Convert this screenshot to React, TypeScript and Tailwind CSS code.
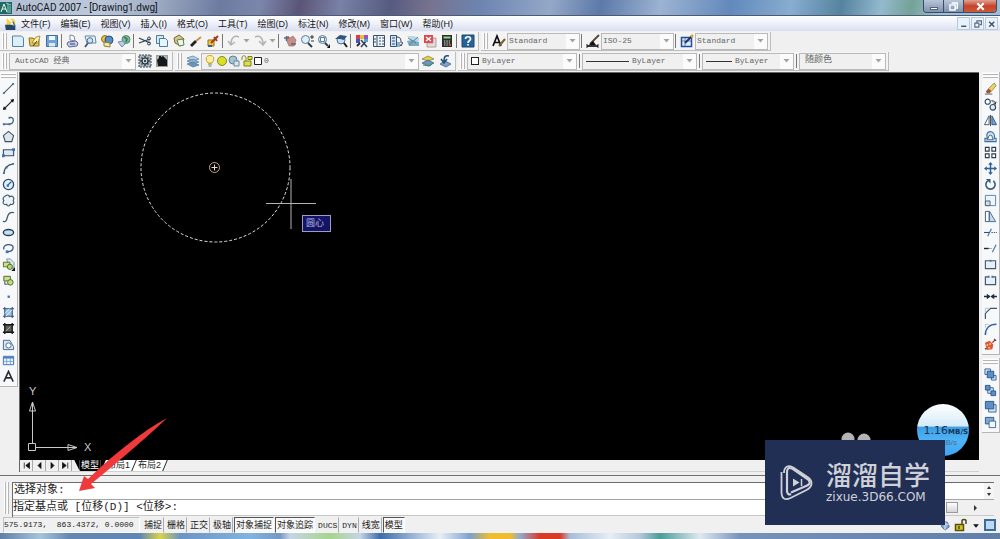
import { useState } from 'react';
import type { ReactNode } from 'react';

interface Tool {
  name: string;
  icon: ReactNode;
}

const NAVY = '#24405f';
const BLUE = '#3d74b0';
const PALE = '#cfe2f3';

// Barra estándar, separada en grupos
const fileTools: Tool[] = [
  { name: 'New', icon: <path d="M1.500 2h9l2 2v8.500h-11z" fill="#d9effa" stroke="#5583a3" /> },
  { name: 'Open', icon: <><path d="M1 4h4l1 1h5v7H2z" fill="#e8c954" stroke="#8a7020" /><path d="M4 9l4-6 4-1-2 7z" fill="#fff3a8" stroke="#8a7020" strokeWidth=".7" /><path d="M5 12l4-5" stroke="#333" /></> },
  { name: 'Save', icon: <><path d="M1.500 1.500h11v11h-11z" fill="#6ea3d4" stroke="#3a6ea0" /><path d="M4 2h6v4H4z" fill="#f2f8fd" /><path d="M4 9h6v3.500H4z" fill="#dbe9f5" /></> },
];

const printTools: Tool[] = [
  { name: 'Plot', icon: <><path d="M4 1l4 1 1 5-5-1z" fill="#fff" stroke="#7a86b0" /><path d="M2 8l8-1 2 2-1 3-8 1-2-3z" fill="#c5cce6" stroke="#5d6a99" /><path d="M4 10h5" stroke="#35406e" /></> },
  { name: 'Plot preview', icon: <><path d="M2 2h10l1 7H4z" fill="#eef5fb" stroke="#5f86ab" /><circle cx="7" cy="6.500" r="2.800" fill="#cfe2f3" stroke="#4d6f96" /><path d="M5 9l-3 4" stroke="#3d5b80" strokeWidth="1.800" /></> },
  { name: 'Publish', icon: <><circle cx="5" cy="5" r="3.500" fill="#e6c23e" stroke="#8c6f13" /><circle cx="9" cy="6" r="4" fill="#5a8bc9" stroke="#2b4f80" /><path d="M4 8l6 1v4l-6-1z" fill="#f3e9a4" stroke="#8c7d2f" /></> },
  { name: '3D DWF', icon: <><circle cx="9" cy="5.500" r="4" fill="#7fb6a2" stroke="#50876e" /><path d="M7 3l3 2-1 3" stroke="#2e7a48" strokeWidth="1.500" fill="none" /><path d="M1 8l5-1 2 3-3 3z" fill="#b8cfe4" stroke="#7291b0" /></> },
];

const editTools: Tool[] = [
  { name: 'Cut', icon: <><path d="M1 4l11 5M1 9l11-4" stroke="#333f4e" strokeWidth="1.300" /><circle cx="11" cy="4.500" r="1.500" fill="none" stroke={NAVY} /><circle cx="11" cy="9.500" r="1.500" fill="none" stroke={NAVY} /></> },
  { name: 'Copy', icon: <><path d="M1.500 1.500h7v8h-7z" fill="#d5e9f5" stroke="#4c7d9e" /><path d="M4.500 4.500h6l2 2v6h-8z" fill="#e6f4fb" stroke="#4c7d9e" /></> },
  { name: 'Paste', icon: <><path d="M2 4l5-3 5 4-3 7-6-3z" fill="#d8c68c" stroke="#77663a" /><path d="M5 6l6-1 1 6-5 1z" fill="#eef6e8" stroke="#5f8150" /></> },
  { name: 'Match properties', icon: <><path d="M2 12l5-5" stroke="#222" strokeWidth="2.800" /><path d="M7 7l5-4" stroke="#d5894b" strokeWidth="1.800" /></> },
  { name: 'Block editor', icon: <><path d="M2 6h6v6H2z" fill="#f4c82e" stroke="#956c10" /><path d="M5 9l7-7M8 3l3 4" stroke="#a33b21" strokeWidth="2" /><path d="M2 12h4" stroke="#2f5fa5" strokeWidth="2" /></> },
];

const undoIcon = <path d="M12 3C7 1 4 4 4 10M1 7l3 4 4-3" fill="none" stroke="#b4b4b4" strokeWidth="1.500" />;
const redoIcon = <path d="M2 3c5-2 8 1 8 7M6 7l4 4 3-4" fill="none" stroke="#b4b4b4" strokeWidth="1.500" />;

const zoomTools: Tool[] = [
  { name: 'Pan', icon: <><path d="M3 5l2-3 2 2 3-2 3 4-2 6H6z" fill="#c98f84" stroke="#a06a62" strokeWidth=".7" /><path d="M1 4h5M3.500 2v5M8 10h5" stroke="#536b8c" strokeWidth="1.300" /></> },
  { name: 'Zoom realtime', icon: <><circle cx="5.500" cy="5.500" r="4" fill="#dfeffb" stroke="#5b7896" /><path d="M8 9l4 4" stroke="#303f50" strokeWidth="2" /><path d="M10 3h4M12 1v4M11 7h3" stroke="#333" /></> },
  { name: 'Zoom window', icon: <><circle cx="5.500" cy="5.500" r="4" fill="#dfeffb" stroke="#5b7896" /><path d="M3.500 3.500h4v4h-4z" fill="#fff" stroke="#5d7b9f" /><path d="M8 9l3 3" stroke="#303f50" strokeWidth="2" /><path d="M13 10v4h-3z" fill="#111" /></> },
  { name: 'Zoom previous', icon: <><circle cx="7" cy="6" r="4" fill="#c8e1f5" stroke="#4c6f95" /><path d="M10 9l3 4" stroke="#222" strokeWidth="2" /><path d="M1 5l5-4 7 1-3 4-4-1z" fill="#33567e" /></> },
];

const paletteTools: Tool[] = [
  { name: 'Properties', icon: <><path d="M1 1h4v4H1z" fill="#e33b44" /><path d="M5 1h4v4H5z" fill="#e3c13b" /><path d="M9 1h4v4H9z" fill="#a24dc4" /><path d="M1 5h4v4H1z" fill="#3b57c9" /><path d="M6 6l6 7M12 6l-6 7" stroke="#333b55" strokeWidth="1.500" /><path d="M2 12l3-3" stroke="#2b2b2b" strokeWidth="2" /><path d="M9 5h4v3H9z" fill="#48a7cc" /></> },
  { name: 'DesignCenter', icon: <><path d="M1.500 1.500h11v11h-11z" fill="#eef3f7" stroke="#35516b" /><path d="M5 2v10M7 4h2M10 4h2M7 7h2M10 7h2M7 10h2M10 10h2M2 5h2M2 8h2" stroke="#35516b" /></> },
  { name: 'Tool palettes', icon: <><path d="M1.500 1.500h6v11h-6z" fill="#d4e4f3" stroke="#2f527c" /><path d="M3 4h3M3 7h3M3 10h3" stroke="#2f527c" /><path d="M8 3c4 0 4 3 4 6M9 8l3 4 2-4" stroke="#28384c" fill="none" /><path d="M8 8h3v5H8z" fill="#8baed2" /></> },
  { name: 'Sheet set', icon: <><path d="M1 2h7l5 2v3H6z" fill="#b9d8e5" /><path d="M1 7l5-1 7 2v4H3z" fill="#7aa9c3" /><path d="M2 4l8 5M3 11l9-8" stroke="#5e8292" /></> },
  { name: 'Markup', icon: <><path d="M1 1h9v8H1z" fill="#e1434d" /><path d="M3 3l5 4M8 3L3 7" stroke="#fff" strokeWidth="1.500" /><path d="M4 9h6V4h3v9H4z" fill="#e6dbdb" stroke="#a58b8b" strokeWidth=".8" /></> },
  { name: 'QuickCalc', icon: <><path d="M2 1h10v12H2z" fill="#26302d" /><path d="M3.500 2.500h7v2h-7z" fill="#9fd08b" /><path d="M4 7h6M4 9h6M4 11h6" stroke="#e4d8d3" strokeDasharray="1.400 1" /><path d="M9 10h2v2H9z" fill="#d64232" /></> },
];

const helpIcon = <><path d="M1 1h12v12H1z" fill="#28629b" stroke="#184673" /><path d="M4.500 5c0-3 5-3 5 0 0 2-2.500 1.500-2.500 4M7 10v1.600" stroke="#fff" strokeWidth="1.700" fill="none" /></>;

const textStyleIcon = <><path d="M1 12L5 2l4 10M2.500 8.500h5" stroke="#111" strokeWidth="1.700" fill="none" /><path d="M7 12l6-7" stroke="#7c5a33" strokeWidth="2" /></>;
const dimStyleIcon = <><path d="M1 12h11" stroke="#222" strokeWidth="1.800" /><path d="M1 10v4M12 10v4" stroke="#222" /><path d="M4 10l3-3 6-6" stroke="#58483a" strokeWidth="1.800" /><path d="M3 11l4-4 3 4z" fill="#111" /></>;
const tableStyleIcon = <><path d="M1.500 3.500h10v9h-10z" fill="#dfebf8" stroke="#234f9a" strokeWidth="1.500" /><path d="M2 7h9M5 4v8" stroke="#5c83ba" /><path d="M5 9l7-7" stroke="#24365c" strokeWidth="2" /><path d="M11 3l2-2" stroke="#dca63c" strokeWidth="2.500" /></>;
const layersIcon = <><path d="M1 4l6-2 6 3-6 2z" fill="#b8d3e8" stroke="#54799b" strokeWidth=".7" /><path d="M1 7l6-2 6 3-6 2z" fill="#8bb2d1" stroke="#54799b" strokeWidth=".7" /><path d="M1 10l6-2 6 3-6 2z" fill="#6897bd" stroke="#54799b" strokeWidth=".7" /></>;
const gearIcon = <><path d="M1 1h12v12H1z" fill="#a9b4ba" stroke="#3a454c" strokeDasharray="2 1" /><path d="M7 2v10M2 7h10M3.500 3.500l7 7M10.500 3.500l-7 7" stroke="#3a4850" strokeWidth="1.500" /><circle cx="7" cy="7" r="3" fill="#cddbe2" stroke="#26323a" strokeWidth="1.200" /><circle cx="7" cy="7" r="1.200" fill="#34424b" /></>;
const homeIcon = <><path d="M1.500 1.500h11v11h-11z" fill="#b3b6b8" stroke="#5d6265" strokeDasharray="1 1" /><path d="M2 6l2-2V2h2v1l2-1 4 4v6H3z" fill="#15191b" /></>;
const layerBackIcon = <><path d="M1 5l6-3 6 3-6 2z" fill="#e6cf4c" stroke="#7a7835" strokeWidth=".7" /><path d="M1 9l6-3 6 3-6 3z" fill="#6b95ba" stroke="#3c5f80" strokeWidth=".7" /><path d="M2 11l7 1 3-3" stroke="#3b8a62" fill="none" /></>;
const layerPrevIcon = <><path d="M2 10l5-3 6 3-5 3z" fill="#7da4c6" stroke="#3c5f80" strokeWidth=".8" /><path d="M11 2C7 1 6 3 6 7M3 5l3 4 3-4" stroke="#234e7c" strokeWidth="1.600" fill="none" /></>;

const drawTools: Tool[] = [
  { name: 'Line', icon: <><path d="M2 12L12 2" stroke="#4a5e6e" strokeWidth="1.200" /><path d="M1 11h2v2H1zM11 1h2v2h-2z" fill={BLUE} /></> },
  { name: 'Construction line', icon: <><path d="M2 12L12 2" stroke="#222" strokeWidth="1.300" /><path d="M1 13l1-4 3 3zM13 1L9 2l3 3z" fill="#111" /></> },
  { name: 'Polyline', icon: <><path d="M1 11h7M8 4c5-2 6 6 0 7" stroke="#3c5572" strokeWidth="1.300" fill="none" /><path d="M1 10h2v2H1zM7 10h2v2H7zM7 3h2v2H7z" fill={BLUE} /></> },
  { name: 'Polygon', icon: <path d="M7 1.500L12.500 6l-2 6.500h-7L1.500 6z" fill="#dde6ed" stroke="#3f5261" strokeWidth="1.200" /> },
  { name: 'Rectangle', icon: <><path d="M1.500 4h11v6.500h-11z" fill="#dde8f3" stroke="#35506c" strokeWidth="1.200" /><path d="M0 9h3v3H0zM11 2.500h3v3h-3z" fill={BLUE} /></> },
  { name: 'Arc', icon: <><path d="M2 13C2 7 6 3 12 2" fill="none" stroke="#40566b" strokeWidth="1.300" /><path d="M1 11h2v2H1zM4 5h2v2H4zM11 1h2v2h-2z" fill={BLUE} /></> },
  { name: 'Circle', icon: <><circle cx="7" cy="7" r="5.500" fill="#e5f0fa" stroke="#2c4d70" strokeWidth="1.400" /><path d="M6 8l4-4" stroke="#245e9c" strokeWidth="1.300" /><path d="M5 7h2.500v2.500H5z" fill={BLUE} /></> },
  { name: 'Revision cloud', icon: <path d="M4 2c2-2 4 0 4 1 3-2 6 1 4 4 2 3-1 5-3 4-1 3-4 2-4 0-3 1-5-1-3-4-2-2 0-4 2-5z" fill="#eef3f6" stroke="#40566b" strokeWidth="1.200" /> },
  { name: 'Spline', icon: <path d="M1 12c3 2 4-1 5-5s4-5 7-4" fill="none" stroke="#40566b" strokeWidth="1.300" /> },
  { name: 'Ellipse', icon: <ellipse cx="7" cy="7" rx="5.500" ry="3.300" fill="#ccdff0" stroke="#263f5a" strokeWidth="1.500" /> },
  { name: 'Ellipse arc', icon: <><path d="M2 8C0 2 12 1 12 6c0 3-3 5-7 4" fill="none" stroke="#40597c" strokeWidth="1.400" /><path d="M4 9h3v3H4z" fill={BLUE} /></> },
  { name: 'Insert block', icon: <><path d="M5 1h4l4 4v6H8z" fill="#dfe6ee" stroke="#7691a8" /><path d="M1.500 4.500h7v5h-7z" fill="#cddf8a" stroke="#566b28" /><circle cx="8.500" cy="9.500" r="2.800" fill="#b4d57b" stroke="#3f6b29" /><path d="M14 10v4h-4z" fill="#111" /></> },
  { name: 'Make block', icon: <><path d="M2 2.500h7v5H2z" fill="#d5dd86" stroke="#4e6226" /><circle cx="9" cy="9" r="3" fill="#c4dc7f" stroke="#3f6b29" /><path d="M3 8v3h3" stroke="#345" fill="none" /></> },
  { name: 'Point', icon: <path d="M6 6h2.500v2.500H6z" fill={BLUE} /> },
  { name: 'Hatch', icon: <><path d="M3 3h8v8H3z" fill="#9cc3e8" /><path d="M3 1v12M11 1v12M1 3h12M1 11h12" stroke="#31537b" strokeWidth="1.200" /><path d="M3 8l5-5M4 11l7-7" stroke="#fff" strokeWidth=".8" /></> },
  { name: 'Gradient', icon: <><path d="M3 3h8v8H3z" fill="#5a6158" /><path d="M3 1v12M11 1v12M1 3h12M1 11h12" stroke="#15191a" strokeWidth="1.500" /><path d="M4 10l5-5" stroke="#a9b3a4" /></> },
  { name: 'Region', icon: <><path d="M1.500 2.500h7l4 7v3h-11z" fill="#d7e6f4" stroke="#41688f" /><circle cx="7" cy="8" r="2.800" fill="#fff" stroke="#41688f" /></> },
  { name: 'Table', icon: <><path d="M1.500 2.500h11v9h-11z" fill="#eef5fd" stroke="#3c6cb0" /><path d="M1.500 2.500h11v2.500h-11z" fill="#4f83c8" /><path d="M5 5v6M9 5v6M2 8h10" stroke="#7ba3d6" /></> },
  { name: 'Multiline text', icon: <path d="M2 12.500L7 1.500l5 11M4 8.500h6" fill="none" stroke="#2a2d31" strokeWidth="1.700" /> },
];

const modifyTools: Tool[] = [
  { name: 'Erase', icon: <><path d="M2 10l3-3 3 3-2 2H3z" fill="#a8503c" /><path d="M5 7l6-6 2 3-5 6z" fill="#ead469" stroke="#7c6c24" strokeWidth=".7" /><path d="M1 13h8" stroke="#555" /></> },
  { name: 'Copy object', icon: <><circle cx="4" cy="4" r="2.800" fill="#fff" stroke="#2f4a66" strokeWidth="1.200" /><circle cx="9.500" cy="10" r="3" fill="#dceaf6" stroke="#2f4a66" strokeWidth="1.200" /><path d="M8 3c3 0 4 1 4 3M10 5l2 2 1-3" stroke="#222" fill="none" /></> },
  { name: 'Mirror', icon: <><path d="M5.500 2v9.500h-5z" fill="#fff" stroke="#3f566c" /><path d="M8.500 2v9.500h5z" fill="#79a7d4" stroke="#2f5179" /><path d="M7 1v12" stroke="#444" /></> },
  { name: 'Offset', icon: <><path d="M1 12.500h12V9H11c2-8-8-10-8-3 0 2 2 3 0 3H1z" fill="#cfe2f3" stroke="#3671ae" strokeWidth="1.200" /><path d="M3 10.500h7c-2-1 0-5-3-5S6 9 3 10.500z" fill="#fff" stroke="#40566b" /></> },
  { name: 'Array', icon: <path d="M1.500 1.500h4v4h-4zM8.500 1.500h4v4h-4zM1.500 8.500h4v4h-4zM8.500 8.500h4v4h-4z" fill="#fff" stroke="#2c3c4c" strokeWidth="1.200" /> },
  { name: 'Move', icon: <><path d="M7 2v10M2 7h10" stroke="#2f6199" strokeWidth="1.600" /><path d="M7 0l2.500 3h-5zM7 14l2.500-3h-5zM0 7l3-2.500v5zM14 7l-3-2.500v5z" fill="#2f6199" /></> },
  { name: 'Rotate', icon: <><path d="M4 3a5 5 0 1 0 6 0" fill="none" stroke="#35597f" strokeWidth="1.700" /><path d="M2 1h5v5z" fill="#35597f" /></> },
  { name: 'Scale', icon: <><path d="M1.500 1.500h11v11h-11z" fill="#eef5fb" stroke="#5583b3" /><path d="M1.500 7.500h5v5h-5z" fill="#d3dfea" stroke="#4e5f70" /></> },
  { name: 'Stretch', icon: <><path d="M1.500 1.500h4v11h-4z" fill="#fff" stroke="#3f566c" /><path d="M6 1.500l6.500 11H6z" fill="#c6dcf0" stroke="#3f6a98" /></> },
  { name: 'Trim', icon: <><path d="M0 7h6" stroke="#36516d" strokeWidth="1.200" /><path d="M8 7h6" stroke="#36516d" strokeDasharray="1.500 1" /><path d="M4 11l4-8" stroke={BLUE} strokeWidth="1.200" /></> },
  { name: 'Extend', icon: <><path d="M0 7h5" stroke="#222" strokeWidth="1.500" /><path d="M5 7h4" stroke="#36516d" strokeDasharray="1 1" /><path d="M9 11l4-8" stroke={BLUE} strokeWidth="1.200" /></> },
  { name: 'Break at point', icon: <><path d="M1.500 3h11v8.500h-11z" fill="#e7eef5" stroke="#465a6d" strokeWidth="1.200" /><path d="M6 2h2v2H6z" fill={BLUE} /></> },
  { name: 'Break', icon: <><path d="M5 3H1.500v8.500h11V3H9" fill="#e7eef5" stroke="#465a6d" strokeWidth="1.300" /><path d="M4 2h2v2H4zM8 2h2v2H8z" fill={BLUE} /></> },
  { name: 'Join', icon: <><path d="M0 7h6M8 7h6" stroke="#1d2d40" strokeWidth="1.500" /><path d="M3 4l4 3-4 3zM11 4L7 7l4 3z" fill="#1d2d40" /></> },
  { name: 'Chamfer', icon: <><path d="M1.500 14V8L7 2.500h7" fill="none" stroke="#40566b" strokeWidth="1.300" /><path d="M1.500 7V2.500H6" fill="none" stroke="#a9c3dc" /></> },
  { name: 'Fillet', icon: <><path d="M1.500 14c0-7 4-11.500 12-11.500" fill="none" stroke="#2f66a5" strokeWidth="1.700" /><path d="M1.500 6V2.500H5" fill="none" stroke="#a9c3dc" /></> },
  { name: 'Explode', icon: <><path d="M1 5l5-2 4 4-1 5-6 1z" fill="#dc5a32" /><path d="M3 7l1 1M6 6l1 1M5 10l1 1" stroke="#ffe9bb" strokeWidth="1.600" /><path d="M9 5l3-3M11 1l2 2M1 12l2-1" stroke="#7c3424" strokeWidth="1.300" /></> },
];

const orderTools: Tool[] = [
  { name: 'Bring to front', icon: <><path d="M1 1h6v6H1zM8 8h5v5H8z" fill={PALE} stroke="#3c6796" /><path d="M3.500 3.500h7v7h-7z" fill="#5c8fc6" stroke="#2c5687" /></> },
  { name: 'Send to back', icon: <><path d="M4 4h6v6H4z" fill={PALE} stroke="#3c6796" /><path d="M1.500 1.500h5v5h-5zM7.500 7.500h5v5h-5z" fill="#5c8fc6" stroke="#2c5687" /></> },
  { name: 'Bring above', icon: <><path d="M5 5h8v8H5z" fill={PALE} stroke="#3c6796" /><path d="M1.500 1.500h9v8h-9z" fill="#5c8fc6" stroke="#2c5687" /></> },
  { name: 'Send under', icon: <><path d="M1.500 1.500h9v7h-9z" fill="#7fa9d6" stroke="#2c5687" /><path d="M5.500 5.500h7v7h-7z" fill="#f3f8fc" stroke="#3c6796" /></> },
];

const menus = ['文件(F)', '编辑(E)', '视图(V)', '插入(I)', '格式(O)', '工具(T)', '绘图(D)', '标注(N)', '修改(M)', '窗口(W)', '帮助(H)'];
const modes = ['捕捉', '栅格', '正交', '极轴', '对象捕捉', '对象追踪', 'DUCS', 'DYN', '线宽', '模型'];

function Icon({ children, className = 'h-[14px] w-[14px]' }: { children: ReactNode; className?: string }) {
  return <svg viewBox="0 0 14 14" fill="none" aria-hidden="true" className={className}>{children}</svg>;
}

function ToolButton({ tool, vertical }: { tool: Tool; vertical?: boolean }) {
  return (
    <button
      type="button"
      aria-label={tool.name}
      className={`flex shrink-0 items-center justify-center hover:bg-sky-100 ${vertical ? 'h-[16px] w-full' : 'h-[18px] w-[17px]'}`}
    >
      <Icon className={vertical ? 'h-[13px] w-[13px]' : 'h-[14px] w-[14px]'}>{tool.icon}</Icon>
    </button>
  );
}

function Tools({ tools }: { tools: Tool[] }) {
  return <>{tools.map((t) => <ToolButton key={t.name} tool={t} />)}</>;
}

function Separator() {
  return <div className="mx-px h-[14px] w-[2px] shrink-0 border-l border-[#777]" />;
}

function Grip() {
  return (
    <div className="flex h-full w-[9px] shrink-0 items-center justify-center gap-px py-px">
      <span className="h-full w-[2px] border-r border-[#b5b5b5] bg-white" />
      <span className="h-full w-[2px] border-r border-[#b5b5b5] bg-white" />
    </div>
  );
}

function Toolbar({ children }: { children: ReactNode }) {
  return (
    <div className="flex h-[19px] shrink-0 items-center border-r border-b border-[#bdbdbd] bg-[#f4f4f4] pr-[2px]">
      <Grip />
      {children}
    </div>
  );
}

function DropArrow() {
  return (
    <svg viewBox="0 0 7 4" aria-hidden="true" className="h-[4px] w-[7px] shrink-0">
      <path d="M.5 0h6l-3 3.500z" fill="#a2a2a2" />
    </svg>
  );
}

function Combo({ label, value, width, children }: { label: string; value: string; width: string; children?: ReactNode }) {
  return (
    <div className={`flex h-[17px] shrink-0 items-center border border-[#b9b9b9] bg-[#f0f0f0] ${width}`}>
      {children}
      <select aria-label={label} className="h-full min-w-0 flex-1 appearance-none bg-transparent text-[#666] outline-none">
        <option>{value}</option>
      </select>
      <span className="flex h-full w-[13px] items-center justify-center bg-[#fbfbfb]"><DropArrow /></span>
    </div>
  );
}

function TitleBar() {
  return (
    <header className="flex h-[16px] shrink-0 justify-between border-b border-[#4c5a72] bg-[linear-gradient(100deg,#b3bfd2_0%,#bcc8d9_10%,#a3b0c6_15%,#6d7ba1_22%,#7c86ab_26%,#5b5577_30%,#7981a6_34%,#575b80_39%,#77738f_43%,#6d84b0_48%,#94a8c8_55%,#5d79a8_60%,#9cb3d2_66%,#6289bb_73%,#88add0_79%,#55839f_84%,#93b9cf_88%,#74a297_91%,#9dbfd9_94%)]">
      <div className="flex items-center gap-[4px]">
        <svg viewBox="0 0 12 12" aria-hidden="true" className="h-[12px] w-[12px]">
          <path d="M0 0h12v12H0z" fill="#1f6a64" />
          <path d="M1 10L4 2l3 8M2 7h4" stroke="#e4f5ef" fill="none" />
          <path d="M8 2v9M10 4v7M6 1l5 2" stroke="#8ad0b8" fill="none" />
        </svg>
        <h1 className="font-['Roboto','Noto_Sans',sans-serif] text-[10px] leading-[14px] text-[#10151d]">AutoCAD 2007 - [Drawing1.dwg]</h1>
      </div>
      <div className="mr-[3px] flex h-[13px] overflow-hidden rounded-b border border-t-0 border-[#3c4a62]">
        <button type="button" aria-label="最小化" className="flex w-[20px] items-center justify-center border-r border-[#3c4a62] bg-linear-to-b from-[#b9c6d8] to-[#7f93af]">
          <span className="mt-1 h-[3px] w-[8px] border border-[#56617a] bg-white" />
        </button>
        <button type="button" aria-label="还原" className="flex w-[20px] items-center justify-center border-r border-[#3c4a62] bg-linear-to-b from-[#b9c6d8] to-[#7f93af]">
          <Icon className="h-[9px] w-[9px]"><path d="M4 1.500h9v8h-3M1.500 4.500h8v8h-8z" stroke="#fff" strokeWidth="2.200" /></Icon>
        </button>
        <button type="button" aria-label="关闭" className="flex w-[32px] items-center justify-center bg-linear-to-b from-[#dfa092] via-[#c4432b] to-[#d0583a]">
          <Icon className="h-[9px] w-[9px]"><path d="M2 2l10 10M12 2L2 12" stroke="#fff" strokeWidth="3.200" /></Icon>
        </button>
      </div>
    </header>
  );
}

function MenuBar() {
  const mdi = 'flex h-[13px] w-[13px] items-center justify-center border border-[#b4c8de] bg-[#e9f2fb]';
  return (
    <nav className="flex h-[15px] shrink-0 items-center justify-between bg-linear-to-b from-white via-[#eef1fa] to-[#d9dff1] pr-[2px] pl-[5px]">
      <div className="flex items-center">
        <Icon className="mr-[4px] h-[12px] w-[12px]">
          <path d="M2 1h8l2 3v7H2z" fill="#f6d23c" />
          <path d="M4 1l5 4-2 4" stroke="#fff" strokeWidth="2" />
          <path d="M0 8h8l4 2v4H1z" fill="#27466e" />
          <path d="M9 4l3 6" stroke="#2c6db2" strokeWidth="1.500" />
        </Icon>
        <div className="flex gap-[10px] text-[9px] leading-[14px] whitespace-nowrap text-[#161616]">
          {menus.map((m) => <button type="button" key={m} className="hover:bg-sky-200">{m}</button>)}
        </div>
      </div>
      <div className="flex gap-px">
        <button type="button" aria-label="最小化图形" className={mdi}><Icon className="h-[8px] w-[8px]"><path d="M2 11h9" stroke="#43536a" strokeWidth="2.500" /></Icon></button>
        <button type="button" aria-label="还原图形" className={mdi}><Icon className="h-[8px] w-[8px]"><path d="M5 5V1.500h8V8h-3M1.500 5.500h7v7h-7z" stroke="#5a6b82" strokeWidth="2" /></Icon></button>
        <button type="button" aria-label="关闭图形" className={mdi}><Icon className="h-[8px] w-[8px]"><path d="M2 3l9 9M11 3l-9 9" stroke="#43536a" strokeWidth="2.500" /></Icon></button>
      </div>
    </nav>
  );
}

function SideBar({ tools }: { tools: Tool[] }) {
  return (
    <div className="border-r border-b border-[#b5b5b5] bg-[#f6f8fa] px-px pt-px pb-[2px]">
      <div className="mb-px flex h-[6px] flex-col gap-px">
        <span className="h-[2px] border-b border-[#b5b5b5] bg-white" />
        <span className="h-[2px] border-b border-[#b5b5b5] bg-white" />
      </div>
      {tools.map((t) => <ToolButton key={t.name} tool={t} vertical />)}
    </div>
  );
}

// Área de dibujo: círculo seleccionado, cursor y símbolo UCS
function Drawing() {
  return (
    <div className="relative min-h-0 flex-1 overflow-hidden bg-black">
      <svg viewBox="0 0 320 170" aria-hidden="true" className="absolute top-[4px] left-0 h-[170px] w-[320px]">
        <circle cx="195.500" cy="90.500" r="74.500" fill="none" stroke="#e2e2e2" strokeDasharray="3 2" />
        <circle cx="194.500" cy="90.500" r="5" fill="none" stroke="#d0a184" />
        <path d="M191.500 90.500h6M194.500 87.500v6" stroke="#f0d9c6" />
        <path d="M246 126.500h50M271 102v50" stroke="#b4b4b4" />
      </svg>
      <div className="absolute top-[142px] left-[282px] border border-[#9c9cc4] bg-[#141464] px-[3px] py-px text-[9px] leading-[13px] text-[#b6b6e6]">
        <span className="pr-[3px]">圆心</span>
      </div>
      <svg viewBox="0 0 80 80" aria-hidden="true" className="absolute bottom-0 left-0 h-[80px] w-[80px]" fill="none" stroke="#c9c9c9">
        <path d="M8.500 63.500h7v7h-7zM12.500 63V22M16 67.500h41M12.500 22l-3 9h6zM57 67.500l-9-3v6z" />
        <text x="9" y="15" fontSize="11" fill="#c9c9c9" stroke="none" fontFamily="Liberation Sans, sans-serif">Y</text>
        <text x="64" y="71" fontSize="11" fill="#c9c9c9" stroke="none" fontFamily="Liberation Sans, sans-serif">X</text>
      </svg>
    </div>
  );
}

function LayoutTabs() {
  const [active, setActive] = useState('模型');
  const arrows = [
    { name: '第一个', d: 'M3 2v8M10 2L5 6l5 4z' },
    { name: '上一个', d: 'M8 2L4 6l4 4z' },
    { name: '下一个', d: 'M4 2l4 4-4 4z' },
    { name: '最后一个', d: 'M9 2v8M2 2l5 4-5 4z' },
  ];
  return (
    <div className="flex h-[12px] shrink-0 items-stretch border-b border-[#d0d0d0] bg-[#f0f0f0]">
      {arrows.map((a) => (
        <button type="button" key={a.name} aria-label={a.name} className="flex w-[13px] items-center justify-center border-r border-[#aaa]">
          <svg viewBox="0 0 12 12" aria-hidden="true" className="h-[9px] w-[9px]"><path d={a.d} fill="#111" stroke="#111" /></svg>
        </button>
      ))}
      <svg viewBox="0 0 6 12" aria-hidden="true" className="ml-[2px] w-[6px]"><path d="M0 0h6v12z" fill="#000" /></svg>
      {['模型', '布局1', '布局2'].map((t) => (
        <div key={t} className="flex">
          <button
            type="button"
            onClick={() => setActive(t)}
            className={`px-px text-[9px] leading-[11px] ${active === t ? 'bg-black text-white' : 'bg-white text-[#222]'}`}
          >
            {t}
          </button>
          <svg viewBox="0 0 6 12" aria-hidden="true" className={`w-[6px] ${t === '布局2' ? 'bg-[#f0f0f0]' : 'bg-white'}`}>
            <path d="M0 0h6L0 12z" fill={active === t ? '#000' : '#fff'} />
            <path d="M5.500 0l-5 12" stroke="#111" />
          </svg>
        </div>
      ))}
    </div>
  );
}

function CommandLine() {
  return (
    <section className="flex h-[42px] shrink-0 border-t border-[#707070] bg-[#f0f0f0] pt-[6px] pr-[6px]">
      <div className="flex w-[12px] shrink-0 justify-center gap-px pb-[3px]">
        <span className="w-[2px] border-r border-[#b5b5b5] bg-white" />
        <span className="w-[2px] border-r border-[#b5b5b5] bg-white" />
      </div>
      <div className="flex min-w-0 flex-1 flex-col border-t border-l border-[#6b6b6b] font-['Liberation_Mono','Noto_Sans_CJK_SC',monospace] text-[11px] text-[#1c1c1c]">
        <div className="flex h-[17px] border-b border-[#a5a5a5] bg-white">
          <p className="flex-1 pl-px leading-[15px]">选择对象:</p>
          <div className="flex w-[10px] flex-col justify-around bg-[#f4f4f4]">
            <button type="button" aria-label="向上滚动"><svg viewBox="0 0 10 4" className="block h-[4px] w-[10px]" aria-hidden="true"><path d="M3 4h4L5 1z" fill="#333" /></svg></button>
            <button type="button" aria-label="向下滚动"><svg viewBox="0 0 10 4" className="block h-[4px] w-[10px]" aria-hidden="true"><path d="M3 0h4L5 3z" fill="#333" /></svg></button>
          </div>
        </div>
        <div className="flex h-[16px] items-center border-b border-[#c8c8c8] bg-white">
          <label htmlFor="cmd" className="leading-[15px] whitespace-nowrap">指定基点或 [位移(D)] &lt;位移&gt;:</label>
          <input id="cmd" type="text" className="min-w-0 flex-1 bg-transparent pl-1 outline-none" />
          <div className="flex h-full w-[48px] items-center bg-[#f0f0f0]">
            <span className="h-[11px] w-[12px] border border-[#9a9a9a] bg-linear-to-b from-white to-[#d5d5d5]" />
            <svg viewBox="0 0 4 6" className="ml-[16px] h-[6px] w-[4px]" aria-hidden="true"><path d="M0 0l3 3-3 3z" fill="#333" /></svg>
          </div>
        </div>
      </div>
    </section>
  );
}

function StatusBar() {
  const [on, setOn] = useState(['对象捕捉', '对象追踪', '模型']);
  const toggle = (m: string) => setOn(on.includes(m) ? on.filter((x) => x !== m) : [...on, m]);
  return (
    <footer className="flex h-[16px] shrink-0 items-center justify-between bg-[#f0f0f0] pr-[4px] pl-[3px] font-['Liberation_Mono','Noto_Sans_CJK_SC',monospace] text-[#1c1c1c]">
      <div className="flex items-center">
        <output className="mr-[2px] w-[137px] border border-[#c2c2c2] border-r-white border-b-white text-[8px] leading-[14px] whitespace-pre">575.9173,  863.4372, 0.0000</output>
        {modes.map((m) => (
          <button
            type="button"
            key={m}
            aria-pressed={on.includes(m)}
            onClick={() => toggle(m)}
            className={`mr-px h-[16px] border px-px pt-[2px] leading-[12px] whitespace-nowrap ${m.startsWith('D') ? 'text-[8px]' : 'text-[9px]'} ${on.includes(m) ? 'border-[#555] border-r-white border-b-white bg-[#f8f8f8]' : 'border-transparent border-r-[#aaa]'}`}
          >
            {m}
          </button>
        ))}
      </div>
      <div className="flex items-center gap-[3px]">
        <Icon className="h-[12px] w-[12px]"><path d="M4 2l6 2 2 5-5 4-4-4z" fill="#8ea8d8" stroke="#3b558d" /><path d="M7 1v12M2 6h10" stroke="#e4ecfb" /></Icon>
        <Icon><path d="M1.500 6.500h8v6h-8z" fill="#d4c31c" stroke="#57500c" strokeWidth="1.500" /><path d="M8 6V3c0-2 4-2 4 0v3M5 8v3" stroke="#4c4718" strokeWidth="1.500" /></Icon>
        <Icon className="h-[10px] w-[10px]"><path d="M3 6h8l-4 5z" fill="#111" /></Icon>
        <button type="button" aria-label="清除屏幕" className="h-[12px] w-[12px] border-2 border-[#3e6a99] bg-[#bcd9f3]" />
      </div>
    </footer>
  );
}

function Watermark() {
  return (
    <aside className="absolute right-[55px] bottom-[14px] flex h-[85px] w-[180px] items-center gap-[12px] bg-[#222f55] pl-[15px] text-[#cfd1d8]">
      <svg viewBox="0 0 34 36" aria-hidden="true" className="h-[36px] w-[34px] shrink-0" fill="none" stroke="#cfd1d8">
        <path d="M11 27.500L26 21c5-2 5-5 0-8L13 4C9 2 7 3 7 7v19c0 3 2 4 4 3" strokeWidth="2.200" />
        <path d="M1.500 7v20c0 6 3 9 9 6l16-8c6-3 7-9 1-13L14 3C8-1 4 2 4 8" strokeWidth="1.800" />
        <path d="M13 13.500v8l6.500-4z" fill="#cfd1d8" stroke="none" />
        <path d="M21.500 14v7" strokeWidth="1.500" />
      </svg>
      <div>
        <p className="text-[26px] leading-[28px] font-medium whitespace-nowrap">溜溜自学</p>
        <p className="font-['DejaVu_Sans',sans-serif] text-[12px] leading-[14px]">zixue.3D66.COM</p>
      </div>
    </aside>
  );
}

function SpeedBall() {
  return (
    <div className="absolute right-[31px] bottom-[83px] flex h-[52px] w-[52px] flex-col items-end justify-center overflow-hidden rounded-full bg-[linear-gradient(180deg,#ffffff_0%,#d5ebf8_42%,#3f9fe6_45%,#4fb4f7_70%,#3da6f2_100%)] pt-[12px] pr-px text-[#17334f]">
      <p className="font-['DejaVu_Sans',sans-serif] text-[11px] leading-[12px] whitespace-nowrap">1.16<span className="text-[7px] font-bold">MB/S</span></p>
      <p className="pr-[11px] text-[8px] leading-[9px] text-[#49718f]">0B/s</p>
    </div>
  );
}

export default function App() {
  return (
    <div className="relative flex h-screen min-h-[520px] w-full flex-col overflow-hidden bg-[#f0f0f0] font-['Liberation_Sans','Noto_Sans_CJK_SC',sans-serif]">
      <TitleBar />
      <MenuBar />

      {/* Barras de herramientas */}
      <div className="flex h-[41px] shrink-0 flex-col gap-px pt-px font-['Liberation_Mono','Noto_Sans_CJK_SC',monospace] text-[8px]">
        <div className="flex gap-[2px]">
          <Toolbar>
            <Tools tools={fileTools} />
            <Separator />
            <Tools tools={printTools} />
            <Separator />
            <Tools tools={editTools} />
            <Separator />
            <ToolButton tool={{ name: 'Undo', icon: undoIcon }} />
            <span className="flex w-[9px] justify-center"><DropArrow /></span>
            <ToolButton tool={{ name: 'Redo', icon: redoIcon }} />
            <span className="flex w-[9px] justify-center"><DropArrow /></span>
            <Separator />
            <Tools tools={zoomTools} />
            <Separator />
            <Tools tools={paletteTools} />
            <Separator />
            <ToolButton tool={{ name: 'Help', icon: helpIcon }} />
          </Toolbar>
          <Toolbar>
            <ToolButton tool={{ name: 'Text style', icon: textStyleIcon }} />
            <Combo label="文字样式" value="Standard" width="w-[73px] pl-px" />
            <Separator />
            <ToolButton tool={{ name: 'Dimension style', icon: dimStyleIcon }} />
            <Combo label="标注样式" value="ISO-25" width="w-[73px] pl-px" />
            <Separator />
            <ToolButton tool={{ name: 'Table style', icon: tableStyleIcon }} />
            <Combo label="表格样式" value="Standard" width="w-[73px] pl-px" />
          </Toolbar>
        </div>
        <div className="flex gap-[2px]">
          <Toolbar>
            <Combo label="工作空间" value="AutoCAD 经典" width="w-[127px] pl-[5px]" />
            <ToolButton tool={{ name: 'Workspace settings', icon: gearIcon }} />
            <ToolButton tool={{ name: 'My workspace', icon: homeIcon }} />
          </Toolbar>
          <Toolbar>
            <ToolButton tool={{ name: 'Layer manager', icon: layersIcon }} />
            <Combo label="图层" value="0" width="w-[218px] pl-[3px]">
              <svg viewBox="0 0 58 14" aria-hidden="true" className="mr-px h-[14px] w-[58px] shrink-0">
                <path d="M3 10h4M3.500 12h3" stroke="#777" />
                <path d="M3 9C0 5 1 1.500 5 1.500S10 5 7 9z" fill="#fdf09a" stroke="#c7a529" />
                <circle cx="17" cy="7" r="4.500" fill="#d8de2a" stroke="#868b14" />
                <circle cx="28" cy="6" r="4" fill="#a8c3d0" stroke="#5f8296" />
                <path d="M29 7h5v5h-5z" fill="#d9e6ee" stroke="#6a8a9c" />
                <path d="M37 6V4c0-3 4-3 4 0v3" fill="none" stroke="#8b8b20" />
                <path d="M39 7h7v5h-7zM43 2.500h4v3h-4z" fill="#dce04a" stroke="#7d8318" />
                <path d="M49.500 3.500h7v7h-7z" fill="#fff" stroke="#222" />
              </svg>
            </Combo>
            <ToolButton tool={{ name: 'Make layer current', icon: layerBackIcon }} />
            <ToolButton tool={{ name: 'Layer previous', icon: layerPrevIcon }} />
          </Toolbar>
          <Toolbar>
            <Combo label="颜色" value="ByLayer" width="w-[110px] pl-[3px]">
              <span className="mr-[3px] h-[8px] w-[8px] shrink-0 border border-[#222] bg-white" />
            </Combo>
            <span className="flex w-[5px] justify-center"><Separator /></span>
            <Combo label="线型" value="ByLayer" width="w-[115px] pl-[3px]">
              <span className="mr-[3px] h-px w-[43px] shrink-0 bg-[#333]" />
            </Combo>
            <span className="flex w-[5px] justify-center"><Separator /></span>
            <Combo label="线宽" value="ByLayer" width="w-[92px] pl-[3px]">
              <span className="mr-[3px] h-px w-[26px] shrink-0 bg-[#333]" />
            </Combo>
            <span className="flex w-[5px] justify-center"><Separator /></span>
            <Combo label="打印样式" value="随颜色" width="w-[87px] pl-[5px] text-[9px]" />
          </Toolbar>
        </div>
      </div>

      <main className="flex min-h-0 flex-1">
        <div className="w-[18px] shrink-0"><SideBar tools={drawTools} /></div>
        <div className="mb-[3px] ml-px flex min-w-0 flex-1 flex-col border-t border-l border-[#666]">
          <Drawing />
          <LayoutTabs />
        </div>
        <div className="ml-[3px] flex w-[18px] shrink-0 flex-col gap-[3px]">
          <SideBar tools={modifyTools} />
          <SideBar tools={orderTools} />
        </div>
      </main>

      <CommandLine />
      <StatusBar />
      <div className="h-[6px] shrink-0 bg-[linear-gradient(90deg,#5e7fa8_0%,#a5c5dc_4%,#6587b0_7%,#5f86b5_14%,#d8d448_16%,#6b94c4_18%,#7fb4e0_25%,#7499c4_28%,#c5d5e6_29%,#a8d48c_33%,#c5d5e6_36%,#3d6da8_38%,#92aed2_41%,#e7eef6_44%,#7fa0cc_47%,#efbd2f_49%,#efbd2f_51%,#8fabd0_52%,#d83a26_54%,#d83a26_56%,#a9bdd9_57%,#e6edf5_61%,#b5c7dc_64%,#4a9c97_66%,#dfe8f1_70%,#7593bb_74%,#5f7fa9_100%)]" />

      {/* Elementos flotantes */}
      <svg viewBox="0 0 34 16" aria-hidden="true" className="absolute right-[127px] bottom-[92px] h-[16px] w-[34px]">
        <circle cx="9" cy="8" r="6.500" fill="#b5b2b6" />
        <circle cx="25" cy="9" r="6.500" fill="#b5b2b6" />
      </svg>
      <SpeedBall />
      <Watermark />
      <svg viewBox="0 0 92 76" aria-hidden="true" className="pointer-events-none absolute bottom-[47px] left-[77px] h-[76px] w-[92px]">
        <path d="M90 2C66 15 38 37 11 63L7 60 2 75l16-3-4-4C42 45 68 23 90 2z" fill="#f0393a" />
      </svg>
    </div>
  );
}
